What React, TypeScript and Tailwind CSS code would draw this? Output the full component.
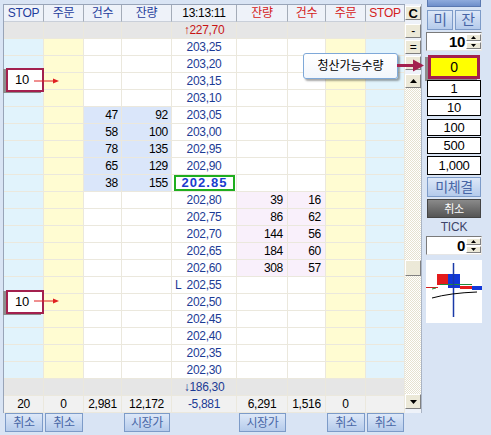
const COLS = "grid grid-cols-[40px_40px_38px_50px_65px_51px_38px_40px_39px] grid-rows-1";
const CELL = "flex items-center border-r border-b border-[#ebe8dd] min-h-0 overflow-hidden";

const prices = [
  "203,25", "203,20", "203,15", "203,10", "203,05", "203,00", "202,95", "202,90", "202.85", "202,80",
  "202,75", "202,70", "202,65", "202,60", "202,55", "202,50", "202,45", "202,40", "202,35", "202,30",
];

const bids: Record<number, [string, string]> = {
  4: ["47", "92"],
  5: ["58", "100"],
  6: ["78", "135"],
  7: ["65", "129"],
  8: ["38", "155"],
};

const asks: Record<number, [string, string]> = {
  9: ["39", "16"],
  10: ["86", "62"],
  11: ["144", "56"],
  12: ["184", "60"],
  13: ["308", "57"],
};

const headers: [string, string][] = [
  ["STOP", "text-[#1f3d9c]"],
  ["주문", "text-[#1f3d9c]"],
  ["건수", "text-[#1f3d9c]"],
  ["잔량", "text-[#1f3d9c]"],
  ["13:13:11", "text-black"],
  ["잔량", "text-[#d42020]"],
  ["건수", "text-[#d42020]"],
  ["주문", "text-[#d42020]"],
  ["STOP", "text-[#d42020]"],
];

function PriceRow({ i }: { i: number }) {
  const b = bids[i];
  const a = asks[i];
  const bidBg = b ? " bg-[#dae6fa]" : " bg-white";
  const askBg = a ? " bg-[#f9f0fb]" : " bg-white";
  return (
    <div className={COLS + " h-[17px]"}>
      <div className={CELL + " bg-[#e1f3fc]"} />
      <div className={CELL + " bg-[#fffcd2]"} />
      <div className={CELL + " justify-end pr-[3px]" + bidBg}>{b?.[0]}</div>
      <div className={CELL + " justify-end pr-[3px]" + bidBg}>{b?.[1]}</div>
      {i === 8 ? (
        <div className="min-h-0 border-r border-b border-[#ebe8dd] bg-white">
          <div className="ml-[2px] mr-[1px] h-[16px] border-2 border-[#1fae1f] flex items-center justify-center text-[13px] font-bold tracking-[1px] text-[#1a3ccf]">
            {prices[i]}
          </div>
        </div>
      ) : (
        <div className={CELL + " relative justify-center bg-white text-[#1c3b94]"}>
          {i === 14 && <span className="absolute left-[3px]">L</span>}
          {prices[i]}
        </div>
      )}
      <div className={CELL + " justify-end pr-[4px]" + askBg}>{a?.[0]}</div>
      <div className={CELL + " justify-end pr-[4px]" + askBg}>{a?.[1]}</div>
      <div className={CELL + " bg-[#fffcd2]"} />
      <div className={CELL + " bg-[#e1f3fc]"} />
    </div>
  );
}

function GrayRow({ label, color }: { label: string; color: string }) {
  return (
    <div className={COLS + " h-[17px] bg-[#e6e6e6]"}>
      <div className={CELL} />
      <div className={CELL} />
      <div className={CELL} />
      <div className={CELL} />
      <div className={CELL + " justify-center " + color}>{label}</div>
      <div className={CELL} />
      <div className={CELL} />
      <div className={CELL} />
      <div className={CELL} />
    </div>
  );
}

function TotalRow() {
  const vals = ["20", "0", "2,981", "12,172", "-5,881", "6,291", "1,516", "0", ""];
  return (
    <div className={COLS + " h-[17px] bg-[#f1f1f1]"}>
      {vals.map((v, k) => (
        <div key={k} className={CELL + " justify-center " + (k === 4 ? "text-[#1c3b94]" : "text-black")}>
          {v}
        </div>
      ))}
    </div>
  );
}

function BlueBtn({ children, className }: { children?: React.ReactNode; className?: string }) {
  return (
    <div
      className={
        "flex items-center justify-center border border-[#7d9bc8] bg-linear-to-b from-[#dde8f8] to-[#b5cbeb] text-[#4866a6] " +
        (className ?? "")
      }
    >
      {children}
    </div>
  );
}

function ScrollBtn({ children, bold }: { children?: React.ReactNode; bold?: boolean }) {
  return (
    <div
      className={
        "h-[14px] flex items-center justify-center bg-[#ece9d8] border border-t-white border-l-white border-b-[#808080] border-r-[#808080] text-[12px] leading-none text-black " +
        (bold ? "font-bold text-[13px]" : "")
      }
    >
      {children}
    </div>
  );
}

function Tri({ up }: { up?: boolean }) {
  return (
    <svg width="7" height="4" viewBox="0 0 7 4">
      <polygon points={up ? "0,4 3.5,0 7,4" : "0,0 3.5,4 7,0"} fill="#000" />
    </svg>
  );
}

function Spinner({ value, className }: { value: string; className?: string }) {
  return (
    <div
      className={
        "h-[19px] flex bg-white border border-t-[#7a7a7a] border-l-[#7a7a7a] border-b-[#e6e6e6] border-r-[#e6e6e6] " +
        (className ?? "")
      }
    >
      <div className="flex-1 flex items-center justify-end pr-[1px] text-[15px] font-bold leading-none">{value}</div>
      <div className="w-[15px] flex flex-col gap-[1px] py-[1px]">
        <div className="flex-1 flex items-center justify-center bg-[#ece9d8] border border-t-white border-l-white border-b-[#808080] border-r-[#808080]">
          <svg width="5" height="3" viewBox="0 0 5 3">
            <polygon points="0,3 2.5,0 5,3" fill="#000" />
          </svg>
        </div>
        <div className="flex-1 flex items-center justify-center bg-[#ece9d8] border border-t-white border-l-white border-b-[#808080] border-r-[#808080]">
          <svg width="5" height="3" viewBox="0 0 5 3">
            <polygon points="0,0 2.5,3 5,0" fill="#000" />
          </svg>
        </div>
      </div>
    </div>
  );
}

function QtyBox({ value, className }: { value: string; className?: string }) {
  return (
    <div
      className={
        "mx-[1px] border border-black bg-white flex items-center justify-center text-[13px] leading-none " +
        (className ?? "")
      }
    >
      {value}
    </div>
  );
}

function StopMark({ top }: { top: string }) {
  return (
    <div
      className={
        "absolute left-[6px] w-[38px] h-[24px] border-2 border-[#a3204e] bg-white flex items-center justify-center text-[13px] shadow-[-3px_1px_0_#8c8c8c] " +
        top
      }
    >
      <span className="mr-[6px]">10</span>
    </div>
  );
}

export default function App() {
  const cancelBtn = "h-full mx-[1px] text-[12px]";
  return (
    <div className="relative w-[491px] h-[435px] overflow-hidden bg-[#d9e4f4] text-[12px] leading-[16px] tracking-[-0.3px] font-['Liberation_Sans','Noto_Sans_CJK_KR',sans-serif]">
      <div className="flex">
        <div className="ml-[3px] mt-[4px] flex flex-col">
          <div className="flex">
            <div className="w-[402px] border-l border-t border-[#98a4b8] bg-white">
              <div className={COLS + " h-[17px] bg-[#eef2f9]"}>
                {headers.map(([t, c], k) => (
                  <div
                    key={k}
                    className={"flex items-center justify-center min-h-0 border-r border-b border-r-[#a4acb8] border-b-[#c9cfd9] " + c}
                  >
                    {t}
                  </div>
                ))}
              </div>
              <GrayRow label="↑227,70" color="text-[#c81414]" />
              {prices.map((_, i) => (
                <PriceRow key={i} i={i} />
              ))}
              <GrayRow label="↓186,30" color="text-[#1c3b94]" />
              <TotalRow />
            </div>
            <div className="w-[17px] flex flex-col bg-[#eef2f9] border-r border-[#aab4c4]">
              <div className="h-[2px]" />
              <ScrollBtn bold>C</ScrollBtn>
              <div className="h-[4px]" />
              <ScrollBtn>-</ScrollBtn>
              <div className="h-[2px]" />
              <ScrollBtn>=</ScrollBtn>
              <div className="h-[2px]" />
              <ScrollBtn />
              <div className="h-[4px]" />
              <ScrollBtn>
                <Tri up />
              </ScrollBtn>
              <div className="h-[306px] flex flex-col pt-[172px] bg-[repeating-conic-gradient(#e6e2d0_0%_25%,#ffffff_0%_50%)] bg-[length:2px_2px]">
                <div className="h-[16px] bg-[#ece9d8] border border-t-white border-l-white border-b-[#808080] border-r-[#808080]" />
              </div>
              <div className="h-[15px] flex items-center justify-center bg-[#ece9d8] border border-t-white border-l-white border-b-[#808080] border-r-[#808080]">
                <Tri />
              </div>
            </div>
          </div>
          <div className={COLS + " h-[19px] ml-[1px] text-[#4866a6]"}>
            <BlueBtn className={cancelBtn}>취소</BlueBtn>
            <BlueBtn className={cancelBtn}>취소</BlueBtn>
            <div />
            <BlueBtn className={cancelBtn + " mx-[2px]"}>시장가</BlueBtn>
            <div />
            <BlueBtn className={cancelBtn + " mx-[2px]"}>시장가</BlueBtn>
            <div />
            <BlueBtn className={cancelBtn}>취소</BlueBtn>
            <BlueBtn className={cancelBtn}>취소</BlueBtn>
          </div>
        </div>

        <div className="ml-[4px] w-[56px] flex flex-col">
          <div className="mx-[1px] h-[7px] bg-linear-to-b from-[#8fabdc] to-[#6f8fca] border border-t-0 border-[#5a78b0]" />
          <div className="mt-[3px] ml-[1px] flex gap-[2px]">
            <BlueBtn className="w-[26px] h-[20px] text-[15px]">미</BlueBtn>
            <BlueBtn className="w-[26px] h-[20px] text-[15px]">잔</BlueBtn>
          </div>
          <Spinner value="10" className="mt-[2px]" />
          <div className="mt-[4px] mx-[2px] h-[24px] border-[3px] border-[#a3204e] bg-[#ffff00] flex items-center justify-center text-[14px] shadow-[-3px_2px_0_#8c8c8c]">
            0
          </div>
          <QtyBox value="1" className="mt-[1px] h-[17px]" />
          <QtyBox value="10" className="mt-[2px] h-[17px]" />
          <QtyBox value="100" className="mt-[3px] h-[17px]" />
          <QtyBox value="500" className="mt-[1px] h-[17px]" />
          <QtyBox value="1,000" className="mt-[2px] h-[19px]" />
          <BlueBtn className="mt-[2px] mx-[1px] h-[20px] text-[14px] border-[#4a70c0] from-[#cfdff8] to-[#93b3e3] text-[#2850a8]">
            미체결
          </BlueBtn>
          <div className="mt-[2px] mx-[1px] h-[19px] flex items-center justify-center bg-linear-to-b from-[#8a8a8a] to-[#555555] border border-[#444] text-white text-[11px]">
            취소
          </div>
          <div className="h-[18px] flex items-center justify-center text-[12px] text-[#3c4468] tracking-[-0.2px]">TICK</div>
          <Spinner value="0" />
          <div className="mt-[5px] h-[63px] bg-white">
            <svg width="56" height="63" viewBox="0 0 56 63">
              <line x1="0" y1="27.5" x2="12" y2="27.5" stroke="#d02020" strokeWidth="1" />
              <rect x="11" y="14" width="11" height="11" fill="#e41c1c" />
              <rect x="22" y="14" width="12" height="14" fill="#1238d8" />
              <rect x="34" y="26" width="12" height="3" fill="#e41c1c" />
              <rect x="46" y="26" width="10" height="4" fill="#1238d8" />
              <line x1="14" y1="24.5" x2="46" y2="24.5" stroke="#1e8a3a" strokeWidth="1" />
              <line x1="6" y1="29" x2="10" y2="28" stroke="#1e8a3a" strokeWidth="1" />
              <line x1="27.5" y1="3" x2="27.5" y2="57" stroke="#1a3aa8" strokeWidth="1.5" />
              <path d="M6 38 Q 24 33 51 32" stroke="#000" strokeWidth="1" fill="none" />
            </svg>
          </div>
        </div>
      </div>

      <StopMark top="top-[68px]" />
      <StopMark top="top-[290px]" />
      <svg className="absolute left-[34px] top-[77px]" width="26" height="8" viewBox="0 0 26 8">
        <line x1="0" y1="4" x2="20" y2="4" stroke="#e02020" strokeWidth="1" />
        <polygon points="19,1.5 25,4 19,6.5" fill="#e02020" />
      </svg>
      <svg className="absolute left-[34px] top-[297px]" width="26" height="8" viewBox="0 0 26 8">
        <line x1="0" y1="4" x2="20" y2="4" stroke="#e02020" strokeWidth="1" />
        <polygon points="19,1.5 25,4 19,6.5" fill="#e02020" />
      </svg>

      <div className="absolute left-[303px] top-[53px] w-[95px] h-[26px] rounded-[3px] border border-[#7ea8d8] bg-linear-to-b from-white to-[#f2f6fc] flex items-center justify-center text-[12px] tracking-normal shadow-[2px_2px_2px_rgba(0,0,0,0.35)]">
        청산가능수량
      </div>
      <svg className="absolute left-[397px] top-[59px]" width="28" height="13" viewBox="0 0 28 13">
        <line x1="0" y1="6.5" x2="18" y2="6.5" stroke="#a3204e" strokeWidth="3" />
        <polygon points="16,0.5 27,6.5 16,12.5" fill="#a3204e" />
      </svg>
    </div>
  );
}
